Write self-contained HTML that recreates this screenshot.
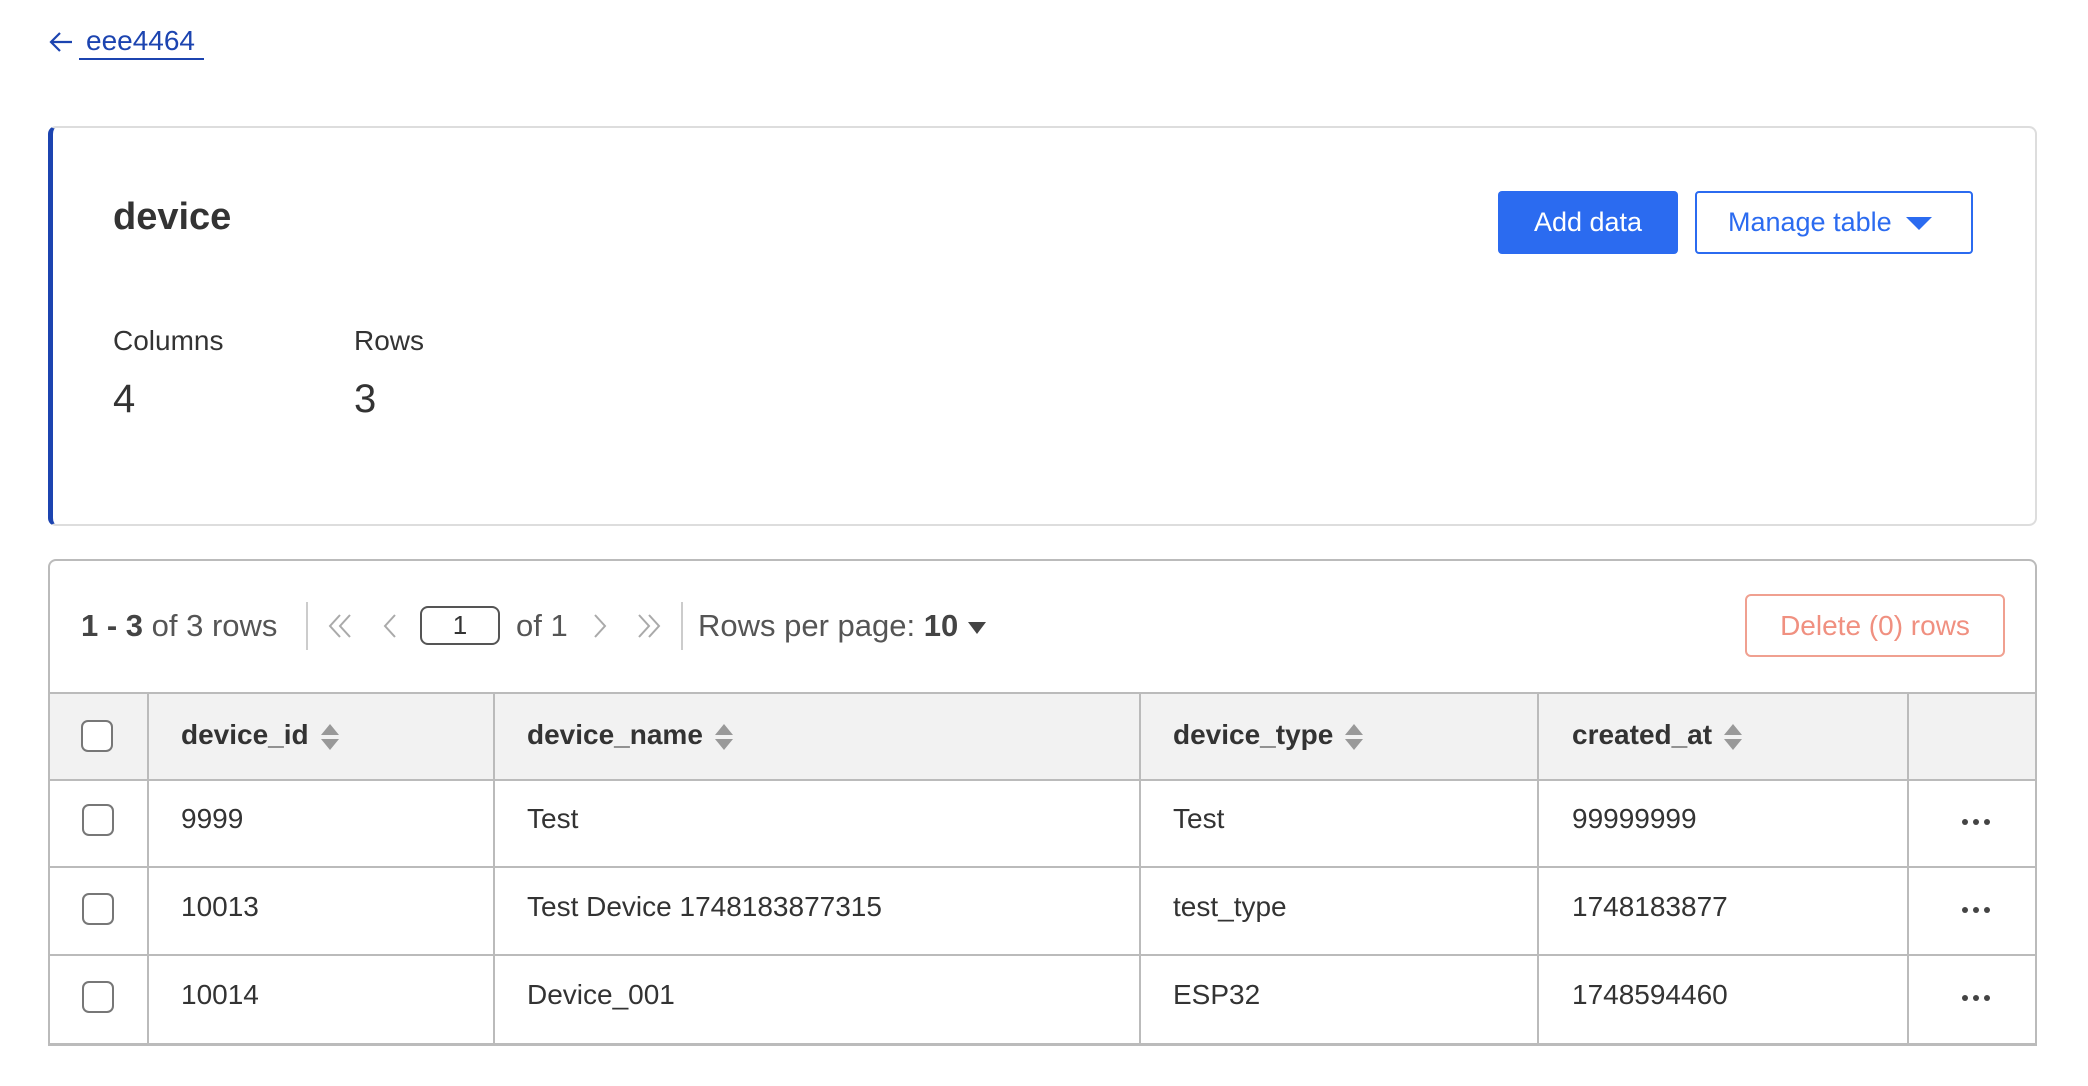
<!DOCTYPE html>
<html><head><meta charset="utf-8"><style>
*{box-sizing:border-box;margin:0;padding:0}
body{width:2088px;height:1086px;background:#fff;font-family:"Liberation Sans",sans-serif;color:#333;position:relative;overflow:hidden}
.a{position:absolute;white-space:nowrap}
.card1{position:absolute;left:48px;top:126px;width:1989px;height:400px;border:2px solid #ddd;border-left:5px solid #1c44b0;border-radius:8px}
.card2{position:absolute;left:48px;top:559px;width:1989px;height:487px;border:2px solid #bbb;border-radius:8px 8px 0 0;overflow:hidden}
.th{position:absolute;top:131px;left:0;right:0;height:89px;background:#f2f2f2;border-top:2px solid #bbb;border-bottom:2px solid #bbb}
.hl{position:absolute;left:0;right:0;height:2px;background:#bbb}
.vl{position:absolute;top:131px;bottom:0;width:2px;background:#bbb}
.cb{position:absolute;width:32px;height:32px;border:2px solid #777;border-radius:7px;background:#fff}
.h{font-weight:bold;font-size:28px;color:#333}
.c{font-size:28px;color:#333}
.sort{display:inline-block;vertical-align:middle;margin-left:12px;width:18px;height:26px;position:relative}
.sort:before{content:"";position:absolute;left:0;top:0;border-left:9px solid transparent;border-right:9px solid transparent;border-bottom:11px solid #999}
.sort:after{content:"";position:absolute;left:0;bottom:0;border-left:9px solid transparent;border-right:9px solid transparent;border-top:11px solid #999}
.dots{position:absolute;width:28px;height:6px}
.dots i{position:absolute;top:0;width:6px;height:6px;border-radius:50%;background:#444}
</style></head><body>
<svg class="a" style="left:48px;top:30px" width="26" height="24" viewBox="0 0 26 24"><path d="M24 12H3M12 3L3 12l9 9" fill="none" stroke="#1c44b0" stroke-width="2.2"/></svg>
<div class="a" style="left:86px;top:25px;font-size:28px;color:#1c44b0">eee4464</div>
<div class="a" style="left:79px;top:58px;width:125px;height:2px;background:#1c44b0"></div>

<div class="card1"></div>
<div class="a" style="left:113px;top:196px;font-size:38px;font-weight:bold;color:#333">device</div>
<div class="a" style="left:1498px;top:191px;width:180px;height:63px;background:#2b6bf0;border-radius:4px;color:#fff;font-size:27px;line-height:63px;text-align:center">Add data</div>
<div class="a" style="left:1695px;top:191px;width:278px;height:63px;border:2px solid #2b6bf0;border-radius:4px;color:#2b6bf0;font-size:27px;line-height:59px;padding-left:31px">Manage table<span style="display:inline-block;margin-left:14px;border-left:13px solid transparent;border-right:13px solid transparent;border-top:13px solid #2b6bf0;vertical-align:middle"></span></div>
<div class="a" style="left:113px;top:325px;font-size:28px">Columns</div>
<div class="a" style="left:354px;top:325px;font-size:28px">Rows</div>
<div class="a" style="left:113px;top:377px;font-size:40px">4</div>
<div class="a" style="left:354px;top:377px;font-size:40px">3</div>

<div class="card2">
<div class="th"></div>
<div class="hl" style="top:305px"></div>
<div class="hl" style="top:393px"></div>
<div class="hl" style="top:482px"></div>
<div class="vl" style="left:97px"></div>
<div class="vl" style="left:443px"></div>
<div class="vl" style="left:1089px"></div>
<div class="vl" style="left:1487px"></div>
<div class="vl" style="left:1857px"></div>
</div>

<div class="a" style="left:81px;top:608px;font-size:31px;color:#555"><b style="color:#444">1 - 3</b> of 3 rows</div>
<div class="a" style="left:306px;top:602px;width:2px;height:48px;background:#ccc"></div>
<svg class="a" style="left:327px;top:612px" width="28" height="28" viewBox="0 0 28 28" fill="none" stroke="#aaa" stroke-width="2"><path d="M13 3L3 14l10 11M23 3L13 14l10 11"/></svg>
<svg class="a" style="left:382px;top:612px" width="16" height="28" viewBox="0 0 16 28" fill="none" stroke="#aaa" stroke-width="2"><path d="M13 3L3 14l10 11"/></svg>
<div class="a" style="left:420px;top:606px;width:80px;height:39px;border:2px solid #555;border-radius:8px;font-size:26px;text-align:center;line-height:35px">1</div>
<div class="a" style="left:516px;top:608px;font-size:31px;color:#555">of 1</div>
<svg class="a" style="left:592px;top:612px" width="16" height="28" viewBox="0 0 16 28" fill="none" stroke="#aaa" stroke-width="2"><path d="M3 3l10 11L3 25"/></svg>
<svg class="a" style="left:634px;top:612px" width="28" height="28" viewBox="0 0 28 28" fill="none" stroke="#aaa" stroke-width="2"><path d="M5 3l10 11L5 25M15 3l10 11-10 11"/></svg>
<div class="a" style="left:681px;top:602px;width:2px;height:48px;background:#ccc"></div>
<div class="a" style="left:698px;top:608px;font-size:31px;color:#555">Rows per page: <b style="color:#444">10</b><span style="display:inline-block;margin-left:10px;border-left:9px solid transparent;border-right:9px solid transparent;border-top:12px solid #444;vertical-align:middle"></span></div>
<div class="a" style="left:1745px;top:594px;width:260px;height:63px;border:2px solid #f0a090;border-radius:6px;color:#f09080;font-size:28px;line-height:59px;text-align:center">Delete (0) rows</div>

<div class="cb" style="left:81px;top:720px"></div>
<div class="a h" style="left:181px;top:719px">device_id<span class="sort"></span></div>
<div class="a h" style="left:527px;top:719px">device_name<span class="sort"></span></div>
<div class="a h" style="left:1173px;top:719px">device_type<span class="sort"></span></div>
<div class="a h" style="left:1572px;top:719px">created_at<span class="sort"></span></div>

<div class="cb" style="left:82px;top:804px"></div>
<div class="a c" style="left:181px;top:803px">9999</div>
<div class="a c" style="left:527px;top:803px">Test</div>
<div class="a c" style="left:1173px;top:803px">Test</div>
<div class="a c" style="left:1572px;top:803px">99999999</div>
<div class="dots" style="left:1962px;top:819px"><i style="left:0"></i><i style="left:11px"></i><i style="left:22px"></i></div>

<div class="cb" style="left:82px;top:893px"></div>
<div class="a c" style="left:181px;top:891px">10013</div>
<div class="a c" style="left:527px;top:891px">Test Device 1748183877315</div>
<div class="a c" style="left:1173px;top:891px">test_type</div>
<div class="a c" style="left:1572px;top:891px">1748183877</div>
<div class="dots" style="left:1962px;top:907px"><i style="left:0"></i><i style="left:11px"></i><i style="left:22px"></i></div>

<div class="cb" style="left:82px;top:981px"></div>
<div class="a c" style="left:181px;top:979px">10014</div>
<div class="a c" style="left:527px;top:979px">Device_001</div>
<div class="a c" style="left:1173px;top:979px">ESP32</div>
<div class="a c" style="left:1572px;top:979px">1748594460</div>
<div class="dots" style="left:1962px;top:995px"><i style="left:0"></i><i style="left:11px"></i><i style="left:22px"></i></div>
</body></html>
